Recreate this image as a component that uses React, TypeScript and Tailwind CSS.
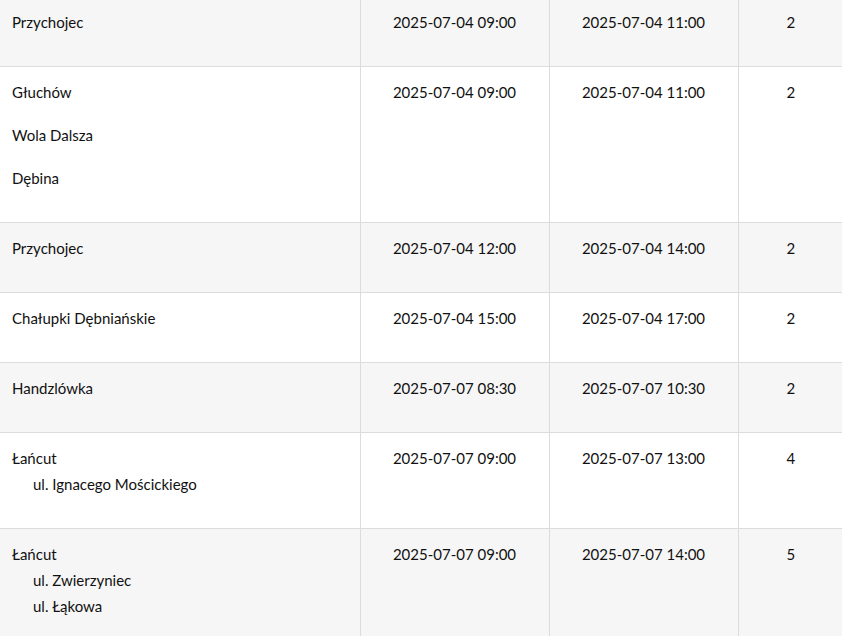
import React from "react";

type Place = { name: string; streets?: string[] };
type Row = { places: Place[]; start: string; end: string; count: number };

const rows: Row[] = [
  { places: [{ name: "Przychojec" }], start: "2025-07-04 09:00", end: "2025-07-04 11:00", count: 2 },
  {
    places: [{ name: "Głuchów" }, { name: "Wola Dalsza" }, { name: "Dębina" }],
    start: "2025-07-04 09:00",
    end: "2025-07-04 11:00",
    count: 2,
  },
  { places: [{ name: "Przychojec" }], start: "2025-07-04 12:00", end: "2025-07-04 14:00", count: 2 },
  { places: [{ name: "Chałupki Dębniańskie" }], start: "2025-07-04 15:00", end: "2025-07-04 17:00", count: 2 },
  { places: [{ name: "Handzlówka" }], start: "2025-07-07 08:30", end: "2025-07-07 10:30", count: 2 },
  {
    places: [{ name: "Łańcut", streets: ["ul. Ignacego Mościckiego"] }],
    start: "2025-07-07 09:00",
    end: "2025-07-07 13:00",
    count: 4,
  },
  {
    places: [{ name: "Łańcut", streets: ["ul. Zwierzyniec", "ul. Łąkowa"] }],
    start: "2025-07-07 09:00",
    end: "2025-07-07 14:00",
    count: 5,
  },
];

export default function App() {
  return (
    <div className="h-[636px] w-[842px] overflow-hidden bg-white font-['Lato',sans-serif] text-[15px] leading-[26px] text-[#111]">
      <table className="-mt-[3px] w-[843px] table-fixed border-collapse">
        <colgroup>
          <col className="w-[360px]" />
          <col className="w-[189px]" />
          <col className="w-[189px]" />
          <col />
        </colgroup>
        <tbody>
          {rows.map((row, i) => (
            <tr key={i} className={i % 2 === 0 ? "bg-[#f6f6f6]" : "bg-white"}>
              <td className="border-r border-b border-[#dcdcdc] px-3 pt-[12px] pb-[14px] align-top">
                {row.places.map((p, j) => (
                  <div key={j} className="mb-[17px]">
                    <div>{p.name}</div>
                    {p.streets?.map((s) => (
                      <div key={s} className="pl-[21px]">
                        {s}
                      </div>
                    ))}
                  </div>
                ))}
              </td>
              <td className="border-r border-b border-[#dcdcdc] pt-[12px] text-center align-top">{row.start}</td>
              <td className="border-r border-b border-[#dcdcdc] pt-[12px] text-center align-top">{row.end}</td>
              <td className="border-b border-[#dcdcdc] pt-[12px] text-center align-top">{row.count}</td>
            </tr>
          ))}
        </tbody>
      </table>
    </div>
  );
}
